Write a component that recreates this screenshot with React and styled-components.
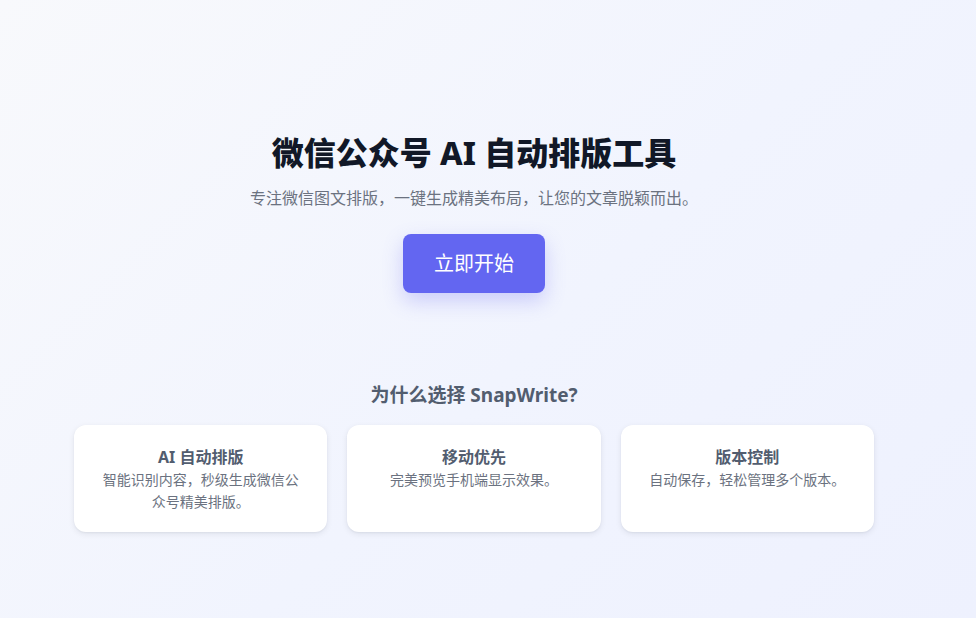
import React from "react";
import styled, { createGlobalStyle } from "styled-components";

const GlobalStyle = createGlobalStyle`
  html, body { margin: 0; padding: 0; }
  body {
    font-family: "Noto Sans", "Noto Sans CJK SC", sans-serif;
    background: linear-gradient(135deg, #f8f9fc 0%, #f1f4fe 55%, #eef1fe 100%);
    min-height: 100vh;
  }
`;

const Page = styled.main`
  min-height: 618px;
  box-sizing: border-box;
  padding: 133px 28px 0 0;
  display: flex;
  flex-direction: column;
  align-items: center;
`;

const Hero = styled.section`
  display: flex;
  flex-direction: column;
  align-items: center;
  text-align: center;
`;

const Title = styled.h1`
  margin: 0;
  font-size: 32px;
  line-height: 40px;
  font-weight: 800;
  color: #111827;
`;

const Subtitle = styled.p`
  margin: 12px 0 0;
  font-size: 16px;
  line-height: 26px;
  color: #6b7280;
`;

const StartButton = styled.button`
  margin-top: 23px;
  padding: 14px 31px;
  font-family: inherit;
  font-size: 20px;
  line-height: 31px;
  color: #ffffff;
  background: #6366f1;
  border: none;
  border-radius: 8px;
  box-shadow: 0 8px 20px rgba(99, 102, 241, 0.28);
  cursor: pointer;
`;

const Features = styled.section`
  margin-top: 88px;
  width: 800px;
  display: flex;
  flex-direction: column;
  align-items: center;
`;

const SectionTitle = styled.h2`
  margin: 0;
  font-size: 19px;
  line-height: 28px;
  font-weight: 700;
  color: #525d6f;
`;

const Grid = styled.div`
  margin-top: 16px;
  width: 100%;
  display: grid;
  grid-template-columns: repeat(3, 1fr);
  gap: 20px;
`;

const Card = styled.div`
  background: #ffffff;
  border-radius: 12px;
  padding: 20px 24px 19px;
  text-align: center;
  box-shadow: 0 2px 6px rgba(15, 23, 42, 0.08), 0 1px 2px rgba(15, 23, 42, 0.05);
`;

const CardTitle = styled.h3`
  margin: 0;
  font-size: 16px;
  line-height: 24px;
  font-weight: 700;
  color: #525d6f;
`;

const CardText = styled.p`
  margin: 0;
  font-size: 14px;
  line-height: 22px;
  color: #6b7280;
`;

const features = [
  { title: "AI 自动排版", text: "智能识别内容，秒级生成微信公众号精美排版。" },
  { title: "移动优先", text: "完美预览手机端显示效果。" },
  { title: "版本控制", text: "自动保存，轻松管理多个版本。" },
];

export default function App() {
  return (
    <>
      <GlobalStyle />
      <Page>
        <Hero>
          <Title>微信公众号 AI 自动排版工具</Title>
          <Subtitle>专注微信图文排版，一键生成精美布局，让您的文章脱颖而出。</Subtitle>
          <StartButton>立即开始</StartButton>
        </Hero>
        <Features>
          <SectionTitle>为什么选择 SnapWrite?</SectionTitle>
          <Grid>
            {features.map((f) => (
              <Card key={f.title}>
                <CardTitle>{f.title}</CardTitle>
                <CardText>{f.text}</CardText>
              </Card>
            ))}
          </Grid>
        </Features>
      </Page>
    </>
  );
}
